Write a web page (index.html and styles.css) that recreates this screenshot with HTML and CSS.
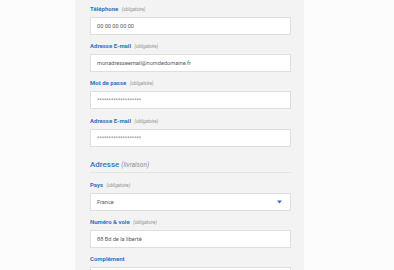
FILE: index.html
```html
<!DOCTYPE html>
<html lang="fr">
<head>
  <meta charset="UTF-8">
  <title>Inscription</title>
  <link rel="stylesheet" href="styles.css">
</head>
<body>
  <div class="panel">
    <div class="field">
      <label class="label">Téléphone <em>(obligatoire)</em></label>
      <div class="box">00 00 00 00 00</div>
    </div>
    <div class="field">
      <label class="label">Adresse E-mail <em>(obligatoire)</em></label>
      <div class="box">monadresseemail@nomdedomaine.fr</div>
    </div>
    <div class="field">
      <label class="label">Mot de passe <em>(obligatoire)</em></label>
      <div class="box pass">*******************</div>
    </div>
    <div class="field">
      <label class="label">Adresse E-mail <em>(obligatoire)</em></label>
      <div class="box pass">*******************</div>
    </div>

    <h2 class="section">Adresse <em>(livraison)</em></h2>

    <div class="field">
      <label class="label">Pays <em>(obligatoire)</em></label>
      <div class="box select">
        <span>France</span>
        <svg width="5" height="4" viewBox="0 0 5 4"><path d="M0 0.5h5L2.5 3.5z" fill="#2f6fc0"/></svg>
      </div>
    </div>
    <div class="field">
      <label class="label">Numéro &amp; voie <em>(obligatoire)</em></label>
      <div class="box">88 Bd de la liberté</div>
    </div>
    <div class="field">
      <label class="label">Complément</label>
      <div class="box"></div>
    </div>
  </div>
</body>
</html>
```

FILE: styles.css
```css
* {
  margin: 0;
  padding: 0;
  box-sizing: border-box;
  font-family: Roboto, "Liberation Sans", sans-serif;
}

body {
  background: #fcfcfc;
  height: 270px;
  overflow: hidden;
}

/* Form panel */
.panel {
  width: 229px;
  margin-left: 75px;
  padding: 4px 13px 20px 15px;
  background: #f3f3f3;
  min-height: 300px;
}

.field {
  margin-bottom: 6.2px;
}

.label {
  display: block;
  height: 9px;
  line-height: 9px;
  margin-bottom: 4px;
  font-size: 6px;
  font-weight: bold;
  color: #3272c2;
}

.label em {
  font-size: 4.5px;
  font-weight: normal;
  color: #909090;
  margin-left: 2px;
}

.box {
  height: 18px;
  line-height: 16px;
  padding: 0 6px;
  background: #fff;
  border: 1px solid #dedede;
  font-size: 5.6px;
  color: #5a5a5a;
}

.pass {
  font-size: 5.4px;
  color: #808080;
}

.select {
  display: flex;
  align-items: center;
  justify-content: space-between;
  padding-right: 8px;
}

/* Section heading */
.section {
  margin-top: 12px;
  margin-bottom: 7px;
  padding-bottom: 1px;
  border-bottom: 1px solid #e4e4e4;
  font-size: 8px;
  line-height: 12px;
  font-weight: 500;
  color: #3272c2;
}

.section em {
  font-size: 6.5px;
  font-weight: normal;
  color: #909090;
}
```
